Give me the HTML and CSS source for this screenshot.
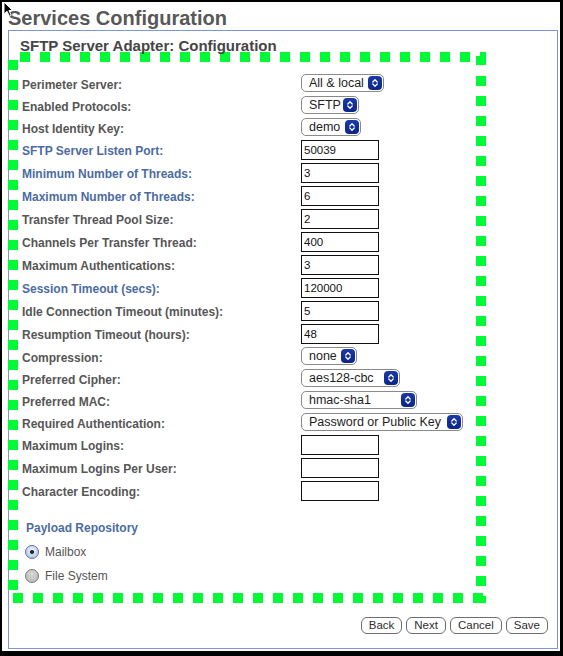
FILE: index.html
```html
<!DOCTYPE html>
<html lang="en">
<head>
<meta charset="utf-8">
<title>Services Configuration</title>
<link rel="stylesheet" href="styles.css">
</head>
<body>
<div class="frame">
  <h1 class="page-title">Services Configuration</h1>
  <div class="panel">
    <h2 class="panel-title">SFTP Server Adapter: Configuration</h2>
    <div class="dotted">
      <div class="fields">
        <label class="lbl">Perimeter Server:</label>
        <div class="select w-perimeter"><span>All &amp; local</span><span class="stepper"><svg viewBox="0 0 8 10" width="8" height="10"><path d="M1.8 4 L4 1.8 L6.2 4 M1.8 6 L4 8.2 L6.2 6" /></svg></span></div>

        <label class="lbl">Enabled Protocols:</label>
        <div class="select w-protocol"><span>SFTP</span><span class="stepper"><svg viewBox="0 0 8 10" width="8" height="10"><path d="M1.8 4 L4 1.8 L6.2 4 M1.8 6 L4 8.2 L6.2 6" /></svg></span></div>

        <label class="lbl">Host Identity Key:</label>
        <div class="select w-host"><span>demo</span><span class="stepper"><svg viewBox="0 0 8 10" width="8" height="10"><path d="M1.8 4 L4 1.8 L6.2 4 M1.8 6 L4 8.2 L6.2 6" /></svg></span></div>

        <label class="lbl lbl-req">SFTP Server Listen Port:</label>
        <input class="field" type="text" value="50039">

        <label class="lbl lbl-req">Minimum Number of Threads:</label>
        <input class="field" type="text" value="3">

        <label class="lbl lbl-req">Maximum Number of Threads:</label>
        <input class="field" type="text" value="6">

        <label class="lbl">Transfer Thread Pool Size:</label>
        <input class="field" type="text" value="2">

        <label class="lbl">Channels Per Transfer Thread:</label>
        <input class="field" type="text" value="400">

        <label class="lbl">Maximum Authentications:</label>
        <input class="field" type="text" value="3">

        <label class="lbl lbl-req">Session Timeout (secs):</label>
        <input class="field" type="text" value="120000">

        <label class="lbl">Idle Connection Timeout (minutes):</label>
        <input class="field" type="text" value="5">

        <label class="lbl">Resumption Timeout (hours):</label>
        <input class="field" type="text" value="48">

        <label class="lbl">Compression:</label>
        <div class="select w-compress"><span>none</span><span class="stepper"><svg viewBox="0 0 8 10" width="8" height="10"><path d="M1.8 4 L4 1.8 L6.2 4 M1.8 6 L4 8.2 L6.2 6" /></svg></span></div>

        <label class="lbl">Preferred Cipher:</label>
        <div class="select w-cipher"><span>aes128-cbc</span><span class="stepper"><svg viewBox="0 0 8 10" width="8" height="10"><path d="M1.8 4 L4 1.8 L6.2 4 M1.8 6 L4 8.2 L6.2 6" /></svg></span></div>

        <label class="lbl">Preferred MAC:</label>
        <div class="select w-mac"><span>hmac-sha1</span><span class="stepper"><svg viewBox="0 0 8 10" width="8" height="10"><path d="M1.8 4 L4 1.8 L6.2 4 M1.8 6 L4 8.2 L6.2 6" /></svg></span></div>

        <label class="lbl">Required Authentication:</label>
        <div class="select w-auth"><span>Password or Public Key</span><span class="stepper"><svg viewBox="0 0 8 10" width="8" height="10"><path d="M1.8 4 L4 1.8 L6.2 4 M1.8 6 L4 8.2 L6.2 6" /></svg></span></div>

        <label class="lbl">Maximum Logins:</label>
        <input class="field" type="text" value="">

        <label class="lbl">Maximum Logins Per User:</label>
        <input class="field" type="text" value="">

        <label class="lbl">Character Encoding:</label>
        <input class="field" type="text" value="">
      </div>

      <div class="payload">
        <div class="payload-title">Payload Repository</div>
        <div class="radio"><span class="radio-dot radio-on"></span><span>Mailbox</span></div>
        <div class="radio"><span class="radio-dot radio-off"></span><span>File System</span></div>
      </div>
    </div>

    <div class="actions">
      <button class="btn" type="button">Back</button>
      <button class="btn" type="button">Next</button>
      <button class="btn" type="button">Cancel</button>
      <button class="btn" type="button">Save</button>
    </div>
  </div>

  <svg class="cursor" width="12" height="17" viewBox="0 0 12 17"><path d="M1 1 L1 13 L4 10.2 L6.4 15.2 L8.2 14.4 L5.9 9.5 L9.6 9.5 Z" fill="#000" stroke="#fff" stroke-width="1"/></svg>
</div>
</body>
</html>
```

FILE: styles.css
```css
html, body {
  margin: 0;
  padding: 0;
  background: #fff;
}

.frame {
  position: relative;
  box-sizing: border-box;
  width: 563px;
  height: 656px;
  border-top: 2px solid #000;
  border-left: 2px solid #000;
  border-right: 3px solid #000;
  border-bottom: 5px solid #000;
  background: #fff;
  font-family: "Liberation Sans", Arial, sans-serif;
  overflow: hidden;
}

.page-title {
  margin: 5px 0 0 6px;
  font-size: 20px;
  line-height: 23px;
  font-weight: bold;
  color: #585858;
}

.panel {
  box-sizing: border-box;
  width: 550px;
  margin-left: 6px;
  border: 1px solid #7d94de;
  padding: 7px 0 14px 11px;
}

.panel-title {
  margin: 0 0 -2px 0;
  font-size: 15px;
  line-height: 16px;
  font-weight: bold;
  color: #454545;
}

.dotted {
  --g: #00fb36;
  box-sizing: border-box;
  width: 478px;
  height: 551px;
  margin-left: -12px;
  padding: 21px 10px 19px 14px;
  background:
    repeating-linear-gradient(90deg, var(--g) 0 10px, transparent 10px 20px) 12px 0 / 460px 10px no-repeat,
    linear-gradient(var(--g), var(--g)) 472px 0 / 6px 4px no-repeat,
    linear-gradient(var(--g), var(--g)) 468px 4px / 10px 9px no-repeat,
    repeating-linear-gradient(180deg, var(--g) 0 10px, transparent 10px 20px) 468px 24px / 10px 510px no-repeat,
    repeating-linear-gradient(180deg, var(--g) 0 10px, transparent 10px 20px) 0 8px / 10px 530px no-repeat,
    repeating-linear-gradient(90deg, var(--g) 0 10px, transparent 10px 20px) 5px 100% / 470px 10px no-repeat,
    linear-gradient(var(--g), var(--g)) 468px 100% / 10px 7px no-repeat;
}

.fields {
  display: grid;
  grid-template-columns: 279px auto;
  align-items: center;
  justify-items: start;
}

.lbl {
  padding-top: 2px;
  font-size: 12px;
  line-height: 15px;
  font-weight: bold;
  color: #565656;
}

.lbl-req {
  color: #4c6ba3;
}

.select {
  box-sizing: border-box;
  display: flex;
  align-items: center;
  justify-content: space-between;
  height: 18px;
  margin: 1px 0 3px;
  padding: 0 1px 0 7px;
  border: 1px solid #8a8a8a;
  border-radius: 5px;
  background: #fff;
  font-size: 12.5px;
  color: #1e1e1e;
}

.w-perimeter { width: 83px; }
.w-protocol { width: 58px; }
.w-host { width: 60px; }
.w-compress { width: 56px; }
.w-cipher { width: 99px; }
.w-mac { width: 116px; }
.w-auth { width: 162px; }

.stepper {
  display: flex;
  align-items: center;
  justify-content: center;
  width: 14px;
  height: 14px;
  border-radius: 4px;
  background: linear-gradient(#1b3aa6, #0b2588);
}

.stepper svg path {
  fill: none;
  stroke: #fff;
  stroke-width: 1.3;
  stroke-linecap: round;
  stroke-linejoin: round;
}

.field {
  box-sizing: border-box;
  width: 78px;
  height: 20px;
  margin: 1px 0 2px;
  padding: 0 2px;
  border: 1px solid #111;
  border-radius: 0;
  background: #fff;
  font-family: "Liberation Sans", Arial, sans-serif;
  font-size: 11.5px;
  color: #111;
  outline: none;
}

.payload {
  padding-left: 4px;
  margin-top: 18px;
}

.payload-title {
  font-size: 12px;
  line-height: 15px;
  font-weight: bold;
  color: #4c6ba3;
}

.radio {
  display: flex;
  align-items: center;
  gap: 6px;
  height: 16px;
  margin-top: 8px;
  font-size: 12px;
  color: #555;
}

.radio + .radio {
  margin-top: 8px;
}

.radio-dot {
  box-sizing: border-box;
  display: flex;
  align-items: center;
  justify-content: center;
  width: 14px;
  height: 14px;
  margin-left: -1px;
  border-radius: 50%;
}

.radio-on {
  border: 1px solid #5d6f95;
  background: radial-gradient(circle at 50% 35%, #eef4fd 0%, #b9cdea 70%, #9db6de 100%);
}

.radio-on::after {
  content: "";
  width: 4px;
  height: 4px;
  border-radius: 50%;
  background: #1a1a1a;
}

.radio-off {
  border: 1px solid #7a7a7a;
  background: radial-gradient(circle at 50% 35%, #d9d9d9 0%, #bdbdbd 75%, #a9a9a9 100%);
}

.actions {
  display: flex;
  justify-content: flex-end;
  gap: 4px;
  margin-top: 14px;
  margin-right: 9px;
}

.btn {
  box-sizing: border-box;
  height: 17px;
  padding: 0 7px;
  border: 1px solid #6d6d6d;
  border-radius: 6px;
  background: #fff;
  font-family: "Liberation Sans", Arial, sans-serif;
  font-size: 11.5px;
  line-height: 15px;
  color: #2d2d2d;
}

.cursor {
  position: absolute;
  left: 1px;
  top: -1px;
}
```
